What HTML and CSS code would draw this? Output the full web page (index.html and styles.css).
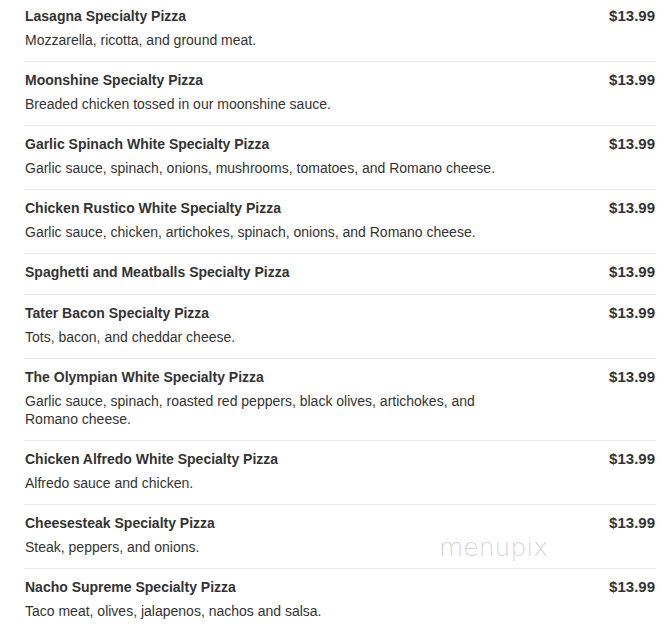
FILE: index.html
```html
<!DOCTYPE html>
<html>
<head>
<meta charset="utf-8">
<link rel="stylesheet" href="styles.css">
</head>
<body>
<div class="menu">
  <div class="item">
    <div class="info"><div class="name">Lasagna Specialty Pizza</div><div class="desc">Mozzarella, ricotta, and ground meat.</div></div>
    <div class="price">$13.99</div>
  </div>
  <div class="item">
    <div class="info"><div class="name">Moonshine Specialty Pizza</div><div class="desc">Breaded chicken tossed in our moonshine sauce.</div></div>
    <div class="price">$13.99</div>
  </div>
  <div class="item">
    <div class="info"><div class="name">Garlic Spinach White Specialty Pizza</div><div class="desc">Garlic sauce, spinach, onions, mushrooms, tomatoes, and Romano cheese.</div></div>
    <div class="price">$13.99</div>
  </div>
  <div class="item">
    <div class="info"><div class="name">Chicken Rustico White Specialty Pizza</div><div class="desc">Garlic sauce, chicken, artichokes, spinach, onions, and Romano cheese.</div></div>
    <div class="price">$13.99</div>
  </div>
  <div class="item item-short">
    <div class="info"><div class="name">Spaghetti and Meatballs Specialty Pizza</div></div>
    <div class="price">$13.99</div>
  </div>
  <div class="item">
    <div class="info"><div class="name">Tater Bacon Specialty Pizza</div><div class="desc">Tots, bacon, and cheddar cheese.</div></div>
    <div class="price">$13.99</div>
  </div>
  <div class="item">
    <div class="info"><div class="name">The Olympian White Specialty Pizza</div><div class="desc">Garlic sauce, spinach, roasted red peppers, black olives, artichokes, and Romano cheese.</div></div>
    <div class="price">$13.99</div>
  </div>
  <div class="item">
    <div class="info"><div class="name">Chicken Alfredo White Specialty Pizza</div><div class="desc">Alfredo sauce and chicken.</div></div>
    <div class="price">$13.99</div>
  </div>
  <div class="item">
    <div class="info"><div class="name">Cheesesteak Specialty Pizza</div><div class="desc">Steak, peppers, and onions.</div></div>
    <div class="price">$13.99</div>
  </div>
  <div class="item item-last">
    <div class="info"><div class="name">Nacho Supreme Specialty Pizza</div><div class="desc">Taco meat, olives, jalapenos, nachos and salsa.</div></div>
    <div class="price">$13.99</div>
  </div>
  <div class="watermark">menupix</div>
</div>
</body>
</html>
```
FILE: styles.css
```css
html, body {
  margin: 0;
  padding: 0;
  background: #fff;
}
body {
  font-family: "Liberation Sans", Arial, sans-serif;
  color: #333;
  overflow: hidden;
}
.menu {
  position: relative;
  width: 632px;
  margin: -2px 0 0 24px;
}
.item {
  display: flex;
  justify-content: space-between;
  align-items: flex-start;
  padding: 9px 1px 12px 1px;
  border-bottom: 1px solid #e6e6e6;
}
.item-short {
  padding-bottom: 13px;
}
.item-last {
  border-bottom: none;
}
.info {
  width: 480px;
}
.name {
  font-size: 14px;
  font-weight: bold;
  line-height: 18px;
  color: #333;
}
.desc {
  font-size: 14px;
  line-height: 18px;
  margin-top: 6px;
  color: #333;
}
.price {
  font-size: 15px;
  font-weight: bold;
  line-height: 18px;
  color: #333;
}
.watermark {
  position: absolute;
  left: 415px;
  top: 535px;
  font-family: "DejaVu Sans", sans-serif;
  font-weight: 200;
  font-size: 25px;
  letter-spacing: 0px;
  color: #d6d6d6;
}
```
